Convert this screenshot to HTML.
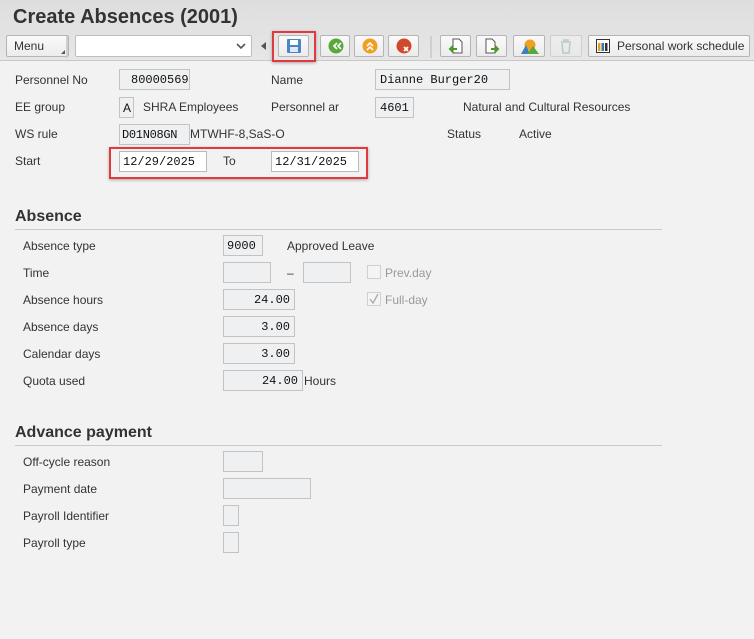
<!DOCTYPE html>
<html><head><meta charset="utf-8"><style>
*{box-sizing:border-box;margin:0;padding:0}
body{width:754px;height:639px;overflow:hidden;background:#f2f2f2;font-family:"Liberation Sans",Arial,sans-serif;font-size:12px;color:#333;position:relative}
.a{position:absolute}
.hdr{left:0;top:0;width:754px;height:61px;background:linear-gradient(#dedede,#e6e6e6);border-bottom:1px solid #c8c8c8}
.t{left:13px;top:6px;font-size:20px;font-weight:bold;color:#333}
.btn{position:absolute;top:35px;height:22px;border:1px solid #b5b5b5;background:linear-gradient(#fafafa,#ececec);border-radius:2px}
.btn svg{position:absolute;left:7px;top:2px}
.lbl{position:absolute;font-size:12px;color:#333;line-height:14px;white-space:nowrap}
.f{position:absolute;height:21px;border:1px solid #c3c3c3;background:#eef0f1;font-family:"Liberation Mono",monospace;font-size:12px;line-height:20px;padding:0 4px;color:#111;white-space:nowrap}
.w{background:#fff;border-color:#b9b9b9}
.r{text-align:right}
.h{position:absolute;left:15px;font-size:16px;font-weight:bold;color:#333}
.ln{position:absolute;left:15px;width:647px;height:1px;background:#c9c9c9}
.sep{position:absolute;top:36px;width:2px;height:22px;background:#cfcfcf}
</style></head><body>
<div class="a hdr"></div>
<div class="a t">Create Absences (2001)</div>
<div class="btn" style="left:6px;width:63px"><span style="position:absolute;left:7px;top:3px;font-size:12px">Menu</span><span style="position:absolute;right:3px;bottom:2px;width:0;height:0;border-left:4px solid transparent;border-bottom:4px solid #555"></span></div>
<div class="sep" style="left:66px"></div>
<div class="a" style="left:75px;top:35px;width:177px;height:22px;background:#fff;border:1px solid #bdbdbd;border-radius:2px"><svg style="position:absolute;right:5px;top:7px" width="10" height="7"><path d="M1 1l4 4 4-4" stroke="#555" stroke-width="1.6" fill="none"/></svg></div>
<div class="a" style="left:261px;top:42px;width:0;height:0;border-top:4px solid transparent;border-bottom:4px solid transparent;border-right:5px solid #555"></div>
<div class="btn" style="left:278px;width:31px"><svg width="16" height="16"><rect x="1" y="1" width="14" height="14" rx="1" fill="#4a86c5"/><rect x="4" y="2" width="8" height="5" fill="#fff"/><rect x="4" y="9" width="8" height="5" fill="#dfe9f3"/></svg></div>
<div class="a" style="left:272px;top:31px;width:44px;height:31px;border:2px solid #e0393e;box-shadow:0 1px 3px rgba(0,0,0,.3)"></div>
<div class="btn" style="left:320px;width:30px"><svg width="16" height="16"><circle cx="8" cy="8" r="7.5" fill="#5aa83a"/><path d="M9 5l-3 3 3 3M13 5l-3 3 3 3" stroke="#fff" stroke-width="1.6" fill="none"/></svg></div>
<div class="btn" style="left:354px;width:30px"><svg width="16" height="16"><circle cx="8" cy="8" r="7.5" fill="#f0a020"/><path d="M5 8l3-3 3 3M5 12l3-3 3 3" stroke="#fff" stroke-width="1.6" fill="none"/></svg></div>
<div class="btn" style="left:388px;width:31px"><svg width="16" height="16"><circle cx="8" cy="8" r="7.5" fill="#d24a2e"/><path d="M8 9l4 4M12 9l-4 4" stroke="#fff" stroke-width="1.8"/></svg></div>
<div class="sep" style="left:430px"></div>
<div class="btn" style="left:440px;width:31px"><svg width="16" height="16"><path d="M5 1h6l3 3v11H5z" fill="#fff" stroke="#555"/><path d="M9 11H2M5 8l-3 3 3 3" stroke="#4a9a2a" stroke-width="2" fill="none"/></svg></div>
<div class="btn" style="left:476px;width:31px"><svg width="16" height="16"><path d="M2 1h6l3 3v11H2z" fill="#fff" stroke="#555"/><path d="M7 11h7M11 8l3 3-3 3" stroke="#4a9a2a" stroke-width="2" fill="none"/></svg></div>
<div class="btn" style="left:513px;width:32px"><svg width="18" height="16"><circle cx="9" cy="7" r="5.5" fill="#f0a020"/><path d="M0 16l5-9 4 9z" fill="#3a7fc4"/><path d="M6 16l6-8 6 8z" fill="#5aa83a"/></svg></div>
<div class="btn" style="left:550px;width:32px;opacity:.45"><svg width="16" height="16"><path d="M3 4h10M6 4V2h4v2M4 5l1 10h6l1-10" stroke="#8aa" stroke-width="1.5" fill="none"/></svg></div>
<div class="btn" style="left:588px;width:162px"><svg width="14" height="16"><rect x="0.5" y="1.5" width="13" height="13" fill="#fff" stroke="#333"/><rect x="2" y="5" width="2.5" height="8" fill="#e5a020"/><rect x="5.5" y="5" width="2.5" height="8" fill="#3a6fb0"/><rect x="9" y="5" width="2.5" height="8" fill="#333"/></svg><span style="position:absolute;left:28px;top:3px;font-size:12px;white-space:nowrap">Personal work schedule</span></div>

<div class="lbl" style="left:15px;top:73px">Personnel No</div>
<div class="f" style="left:119px;top:69px;width:71px;padding-left:11px">80000569</div>
<div class="lbl" style="left:271px;top:73px">Name</div>
<div class="f" style="left:375px;top:69px;width:135px">Dianne Burger20</div>
<div class="lbl" style="left:15px;top:100px">EE group</div>
<div class="f" style="left:119px;top:97px;width:15px;padding:0 3px;font-family:'Liberation Sans'">A</div>
<div class="lbl" style="left:143px;top:100px">SHRA Employees</div>
<div class="lbl" style="left:271px;top:100px">Personnel ar</div>
<div class="f" style="left:375px;top:97px;width:39px">4601</div>
<div class="lbl" style="left:463px;top:100px">Natural and Cultural Resources</div>
<div class="lbl" style="left:15px;top:127px">WS rule</div>
<div class="f" style="left:119px;top:124px;width:71px;padding:0 2px;letter-spacing:-.3px">D01N08GN</div>
<div class="lbl" style="left:190px;top:127px">MTWHF-8,SaS-O</div>
<div class="lbl" style="left:447px;top:127px">Status</div>
<div class="lbl" style="left:519px;top:127px">Active</div>
<div class="lbl" style="left:15px;top:154px">Start</div>
<div class="f w" style="left:119px;top:151px;width:88px;padding-left:3px">12/29/2025</div>
<div class="lbl" style="left:223px;top:154px">To</div>
<div class="f w" style="left:271px;top:151px;width:88px;padding-left:3px">12/31/2025</div>
<div class="a" style="left:109px;top:147px;width:259px;height:32px;border:2px solid #e0393e;box-shadow:0 1px 3px rgba(0,0,0,.3)"></div>

<div class="h" style="top:208px">Absence</div>
<div class="ln" style="top:229px"></div>
<div class="lbl" style="left:23px;top:239px">Absence type</div>
<div class="f" style="left:223px;top:235px;width:40px;padding-left:3px">9000</div>
<div class="lbl" style="left:287px;top:239px">Approved Leave</div>
<div class="lbl" style="left:23px;top:266px">Time</div>
<div class="f" style="left:223px;top:262px;width:48px"></div>
<div class="lbl" style="left:287px;top:266px">–</div>
<div class="f" style="left:303px;top:262px;width:48px"></div>
<div class="a" style="left:367px;top:265px;width:14px;height:14px;border:1px solid #d0d0d0;background:#f4f4f4"></div>
<div class="lbl" style="left:385px;top:266px;color:#999">Prev.day</div>
<div class="lbl" style="left:23px;top:293px">Absence hours</div>
<div class="f r" style="left:223px;top:289px;width:72px">24.00</div>
<div class="a" style="left:367px;top:292px;width:14px;height:14px;border:1px solid #d0d0d0;background:#f4f4f4"><svg width="12" height="12" style="position:absolute;left:0;top:0"><path d="M2 6l3 4 5-9" stroke="#aaa" stroke-width="1.3" fill="none"/></svg></div>
<div class="lbl" style="left:385px;top:293px;color:#999">Full-day</div>
<div class="lbl" style="left:23px;top:320px">Absence days</div>
<div class="f r" style="left:223px;top:316px;width:72px">3.00</div>
<div class="lbl" style="left:23px;top:347px">Calendar days</div>
<div class="f r" style="left:223px;top:343px;width:72px">3.00</div>
<div class="lbl" style="left:23px;top:374px">Quota used</div>
<div class="f r" style="left:223px;top:370px;width:80px">24.00</div>
<div class="lbl" style="left:304px;top:374px">Hours</div>

<div class="h" style="top:424px">Advance payment</div>
<div class="ln" style="top:445px"></div>
<div class="lbl" style="left:23px;top:455px">Off-cycle reason</div>
<div class="f" style="left:223px;top:451px;width:40px"></div>
<div class="lbl" style="left:23px;top:482px">Payment date</div>
<div class="f" style="left:223px;top:478px;width:88px"></div>
<div class="lbl" style="left:23px;top:509px">Payroll Identifier</div>
<div class="f" style="left:223px;top:505px;width:16px"></div>
<div class="lbl" style="left:23px;top:536px">Payroll type</div>
<div class="f" style="left:223px;top:532px;width:16px"></div>
</body></html>
